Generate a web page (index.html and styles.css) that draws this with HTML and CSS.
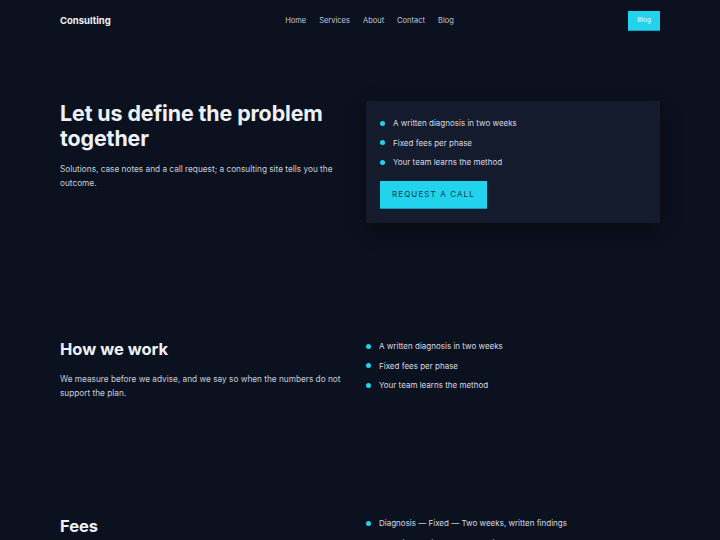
FILE: index.html
```html
<!DOCTYPE html>
<html lang="en">
<head>
<meta charset="utf-8">
<title>Consulting</title>
<link rel="stylesheet" href="styles.css">
</head>
<body>
<header class="site-header">
  <div class="brand">Consulting</div>
  <nav class="nav">
    <a href="#">Home</a>
    <a href="#">Services</a>
    <a href="#">About</a>
    <a href="#">Contact</a>
    <a href="#">Blog</a>
  </nav>
  <a class="nav-cta" href="#">Blog</a>
</header>

<section class="section hero">
  <div class="col">
    <h1 class="hero-title">Let us define the problem together</h1>
    <p class="lead">Solutions, case notes and a call request; a consulting site tells you the outcome.</p>
  </div>
  <div class="col">
    <div class="card">
      <ul class="dots">
        <li>A written diagnosis in two weeks</li>
        <li>Fixed fees per phase</li>
        <li>Your team learns the method</li>
      </ul>
      <a class="btn" href="#">Request a call</a>
    </div>
  </div>
</section>

<section class="section">
  <div class="col">
    <h2 class="sec-title">How we work</h2>
    <p class="lead">We measure before we advise, and we say so when the numbers do not support the plan.</p>
  </div>
  <div class="col">
    <ul class="dots">
      <li>A written diagnosis in two weeks</li>
      <li>Fixed fees per phase</li>
      <li>Your team learns the method</li>
    </ul>
  </div>
</section>

<section class="section">
  <div class="col">
    <h2 class="sec-title">Fees</h2>
    <p class="lead">One price per phase, agreed before the work begins.</p>
  </div>
  <div class="col">
    <ul class="dots">
      <li>Diagnosis — Fixed — Two weeks, written findings</li>
      <li>Redesign — Fixed — Four to six weeks, new process</li>
      <li>Coaching — Monthly — Your team runs it</li>
    </ul>
  </div>
</section>
</body>
</html>
```

FILE: styles.css
```css
* { box-sizing: border-box; }
html, body { margin: 0; padding: 0; }
body {
  background: #0b111f;
  color: #e5eaf1;
  font-family: Inter, "Noto Sans", sans-serif;
}
a { text-decoration: none; color: inherit; }

.site-header {
  display: flex;
  align-items: center;
  justify-content: space-between;
  padding: 0 60px;
  height: 41px;
}
.brand {
  font-size: 9.5px;
  font-weight: 700;
  color: #eef2f7;
}
.nav {
  display: flex;
  gap: 13px;
  font-size: 7.5px;
  color: #c3cad5;
}
.nav-cta {
  display: flex;
  align-items: center;
  height: 20px;
  padding: 0 9px;
  background: #22d3ee;
  color: #eafcff;
  font-size: 6.5px;
  border-bottom: 1px solid #0e9fbb;
}

.section {
  display: grid;
  grid-template-columns: 294px 294px;
  column-gap: 12px;
  padding: 58px 60px;
  align-items: start;
}
.hero { padding-top: 60px; }

.hero-title {
  margin: 0;
  font-size: 21.4px;
  line-height: 25px;
  font-weight: 700;
  letter-spacing: -0.1px;
  color: #eef2f8;
}
.lead {
  margin: 11px 0 0;
  font-size: 8.25px;
  line-height: 14px;
  color: #c8cfd9;
}
.sec-title {
  margin: 0;
  font-size: 16.5px;
  line-height: 20px;
  font-weight: 700;
  color: #eef2f8;
}
.section .sec-title + .lead { margin-top: 13px; }

.card {
  background: #131b2d;
  padding: 15px 14px 14px;
  box-shadow: 0 6px 18px rgba(0, 0, 0, 0.45);
}
.dots {
  list-style: none;
  margin: 0;
  padding: 0;
  display: flex;
  flex-direction: column;
  gap: 5.5px;
}
.dots li {
  display: flex;
  align-items: center;
  gap: 8px;
  font-size: 8px;
  line-height: 14px;
  color: #d6dce5;
}
.dots li::before {
  content: "";
  width: 5px;
  height: 5px;
  border-radius: 50%;
  background: #22d3ee;
  flex: none;
}
.btn {
  display: inline-block;
  margin-top: 12px;
  background: #22d3ee;
  color: #0f3d4d;
  font-size: 8px;
  letter-spacing: 1.1px;
  text-transform: uppercase;
  padding: 8px 12px 8px;
  line-height: 11px;
  border-bottom: 1px solid #0e9fbb;
}
```
